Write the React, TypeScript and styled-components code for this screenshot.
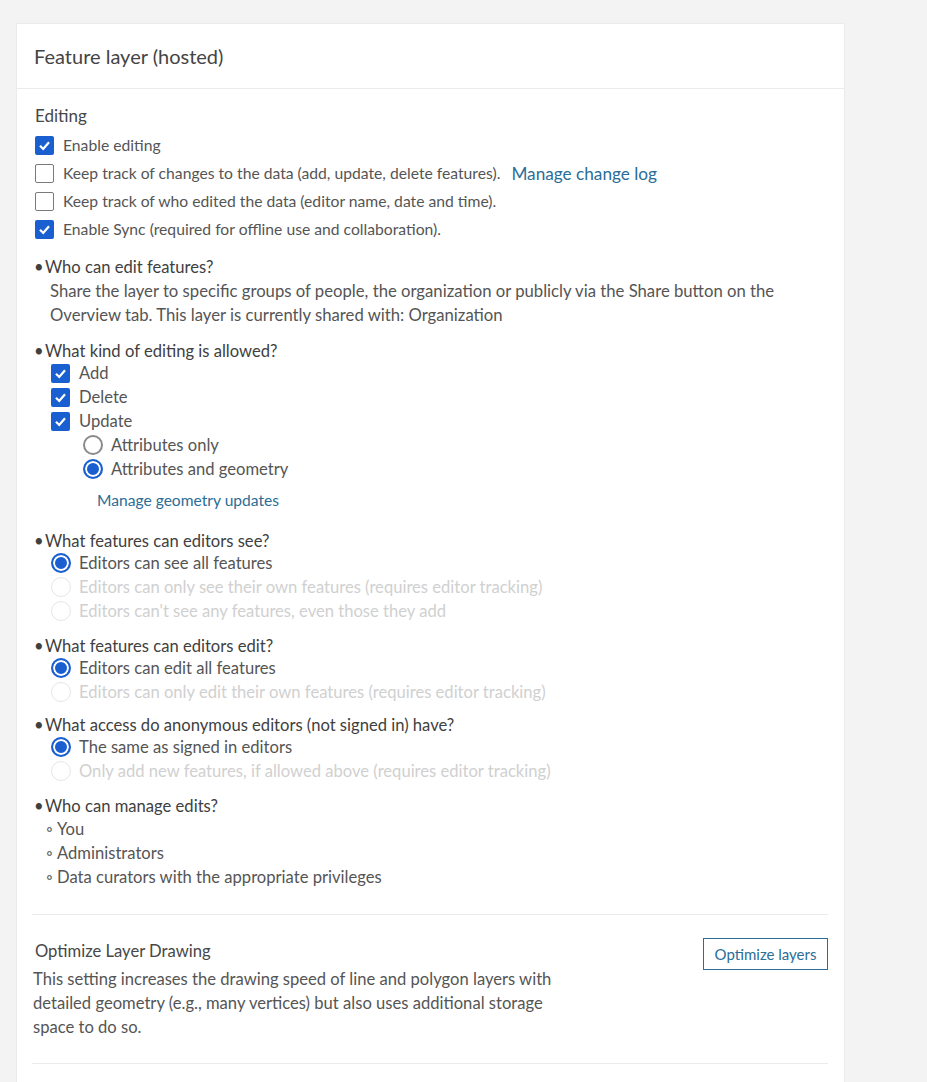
import { createGlobalStyle, styled } from "styled-components";

const BLUE = "#1a5fd0";
const LINK = "#2b6d96";
const TEXT = "#555";

const GlobalStyle = createGlobalStyle`
    body {
        margin: 0;
        background: #f3f3f3;
        font-family: Lato, "Liberation Sans", sans-serif;
        color: ${TEXT};
    }
`;

const Page = styled.div`
    padding: 23px 0 0 16px;
    min-height: 1059px;
`;

const Card = styled.section`
    width: 827px;
    min-height: 1059px;
    background: #fff;
    border: 1px solid #ebebeb;
    border-bottom: none;
`;

const CardHeader = styled.header`
    padding: 18px 17px;
    font-size: 20px;
    line-height: 28px;
    color: #444;
    border-bottom: 1px solid #ebebeb;
`;

const CardBody = styled.div`
    padding: 15px 16px 0 15px;
`;

const GroupTitle = styled.div`
    padding-left: 3px;
    font-size: 17px;
    line-height: 24px;
    color: #474747;
`;

const CheckList = styled.div`
    margin-top: 3px;
    padding-left: 3px;
`;

const Row = styled.label<{ $height?: number; $indent?: number; $muted?: boolean }>`
    display: flex;
    align-items: center;
    height: ${(p) => p.$height ?? 24}px;
    padding-left: ${(p) => p.$indent ?? 0}px;
    font-size: ${(p) => (p.$height === 28 ? 15.7 : 16.6)}px;
    color: ${(p) => (p.$muted ? "#d0d0d0" : TEXT)};
`;

const Box = styled.span<{ $checked?: boolean }>`
    flex: none;
    display: flex;
    align-items: center;
    justify-content: center;
    box-sizing: border-box;
    width: 19px;
    height: 19px;
    margin-right: 9px;
    border-radius: 2px;
    background: ${(p) => (p.$checked ? BLUE : "#fff")};
    border: ${(p) => (p.$checked ? "none" : "1.5px solid #7a7a7a")};
`;

const Radio = styled.span<{ $checked?: boolean; $disabled?: boolean }>`
    flex: none;
    box-sizing: border-box;
    width: 20px;
    height: 20px;
    margin-right: 8px;
    border-radius: 50%;
    border: ${(p) => (p.$disabled ? "1px solid #e6e6e6" : `2px solid ${p.$checked ? BLUE : "#8a8a8a"}`)};
    background: ${(p) => (p.$checked ? BLUE : "#fff")};
    box-shadow: ${(p) => (p.$checked ? "inset 0 0 0 2px #fff" : "none")};
`;

const Link = styled.a`
    color: ${LINK};
    text-decoration: none;
    cursor: pointer;
`;

const InlineLink = styled(Link)`
    margin-left: 11px;
    font-size: 17.2px;
`;

const LinkRow = styled.div`
    margin-top: 7px;
    line-height: 24px;
    font-size: 15.6px;
    padding-left: 63px;
`;

const Question = styled.div<{ $gap?: number }>`
    margin-top: ${(p) => p.$gap ?? 14}px;
    padding-left: 2px;
`;

const QuestionTitle = styled.div`
    display: flex;
    font-size: 16.6px;
    line-height: 18px;
    color: #404040;
    &::before {
        content: "•";
        width: 11px;
        flex: none;
    }
`;

const Answer = styled.p`
    margin: 3px 0 0;
    padding-left: 16px;
    max-width: 790px;
    font-size: 16.7px;
    line-height: 24px;
`;

const Options = styled.div`
    margin-top: 1px;
    padding-left: 17px;
`;

const SubList = styled.ul`
    margin: 2px 0 0;
    padding: 0 0 0 12px;
    list-style: none;
`;

const SubItem = styled.li`
    display: flex;
    font-size: 16.6px;
    line-height: 24px;
    &::before {
        content: "◦";
        width: 11px;
        flex: none;
    }
`;

const Setting = styled.div`
    margin-top: 25px;
    padding: 24px 0 24px;
    border-top: 1px solid #ebebeb;
    border-bottom: 1px solid #ebebeb;
    display: flex;
    justify-content: space-between;
    align-items: flex-start;
`;

const SettingText = styled.div`
    padding-left: 1px;
    max-width: 550px;
`;

const SettingTitle = styled.div`
    padding-left: 2px;
    font-size: 16.6px;
    line-height: 24px;
    color: #474747;
`;

const SettingDesc = styled.p`
    margin: 4px 0 0;
    font-size: 16.6px;
    line-height: 24px;
`;

const OutlineButton = styled.button`
    width: 125px;
    height: 32px;
    margin-top: -1px;
    background: #fff;
    border: 1px solid ${LINK};
    color: ${LINK};
    font-family: inherit;
    font-size: 15px;
    cursor: pointer;
`;

const Check = ({ checked }: { checked?: boolean }) => (
    <Box $checked={checked}>
        {checked && (
            <svg width='13' height='13' viewBox='0 0 13 13'>
                <polyline points='2,6.8 5.2,10 11,3.2' fill='none' stroke='#fff' strokeWidth='2.2' />
            </svg>
        )}
    </Box>
);

const App = () => {
    return (
        <>
            <GlobalStyle />
            <Page>
                <Card>
                    <CardHeader>Feature layer (hosted)</CardHeader>
                    <CardBody>
                        <GroupTitle>Editing</GroupTitle>
                        <CheckList>
                            <Row $height={28}>
                                <Check checked />
                                Enable editing
                            </Row>
                            <Row $height={28}>
                                <Check />
                                Keep track of changes to the data (add, update, delete features).
                                <InlineLink>Manage change log</InlineLink>
                            </Row>
                            <Row $height={28}>
                                <Check />
                                Keep track of who edited the data (editor name, date and time).
                            </Row>
                            <Row $height={28}>
                                <Check checked />
                                Enable Sync (required for offline use and collaboration).
                            </Row>
                        </CheckList>

                        <Question $gap={15}>
                            <QuestionTitle>Who can edit features?</QuestionTitle>
                            <Answer>
                                Share the layer to specific groups of people, the organization or publicly via the Share
                                button on the Overview tab. This layer is currently shared with: Organization
                            </Answer>
                        </Question>

                        <Question $gap={15}>
                            <QuestionTitle>What kind of editing is allowed?</QuestionTitle>
                            <Options>
                                <Row>
                                    <Check checked />
                                    Add
                                </Row>
                                <Row>
                                    <Check checked />
                                    Delete
                                </Row>
                                <Row>
                                    <Check checked />
                                    Update
                                </Row>
                                <Row $indent={32}>
                                    <Radio />
                                    Attributes only
                                </Row>
                                <Row $indent={32}>
                                    <Radio $checked />
                                    Attributes and geometry
                                </Row>
                            </Options>
                            <LinkRow>
                                <Link>Manage geometry updates</Link>
                            </LinkRow>
                        </Question>

                        <Question $gap={20}>
                            <QuestionTitle>What features can editors see?</QuestionTitle>
                            <Options>
                                <Row>
                                    <Radio $checked />
                                    Editors can see all features
                                </Row>
                                <Row $muted>
                                    <Radio $disabled />
                                    Editors can only see their own features (requires editor tracking)
                                </Row>
                                <Row $muted>
                                    <Radio $disabled />
                                    Editors can't see any features, even those they add
                                </Row>
                            </Options>
                        </Question>

                        <Question>
                            <QuestionTitle>What features can editors edit?</QuestionTitle>
                            <Options>
                                <Row>
                                    <Radio $checked />
                                    Editors can edit all features
                                </Row>
                                <Row $muted>
                                    <Radio $disabled />
                                    Editors can only edit their own features (requires editor tracking)
                                </Row>
                            </Options>
                        </Question>

                        <Question $gap={12}>
                            <QuestionTitle>What access do anonymous editors (not signed in) have?</QuestionTitle>
                            <Options>
                                <Row>
                                    <Radio $checked />
                                    The same as signed in editors
                                </Row>
                                <Row $muted>
                                    <Radio $disabled />
                                    Only add new features, if allowed above (requires editor tracking)
                                </Row>
                            </Options>
                        </Question>

                        <Question $gap={14}>
                            <QuestionTitle>Who can manage edits?</QuestionTitle>
                            <SubList>
                                <SubItem>You</SubItem>
                                <SubItem>Administrators</SubItem>
                                <SubItem>Data curators with the appropriate privileges</SubItem>
                            </SubList>
                        </Question>

                        <Setting>
                            <SettingText>
                                <SettingTitle>Optimize Layer Drawing</SettingTitle>
                                <SettingDesc>
                                    This setting increases the drawing speed of line and polygon layers with detailed
                                    geometry (e.g., many vertices) but also uses additional storage space to do so.
                                </SettingDesc>
                            </SettingText>
                            <OutlineButton>Optimize layers</OutlineButton>
                        </Setting>
                    </CardBody>
                </Card>
            </Page>
        </>
    );
};

export default App;
